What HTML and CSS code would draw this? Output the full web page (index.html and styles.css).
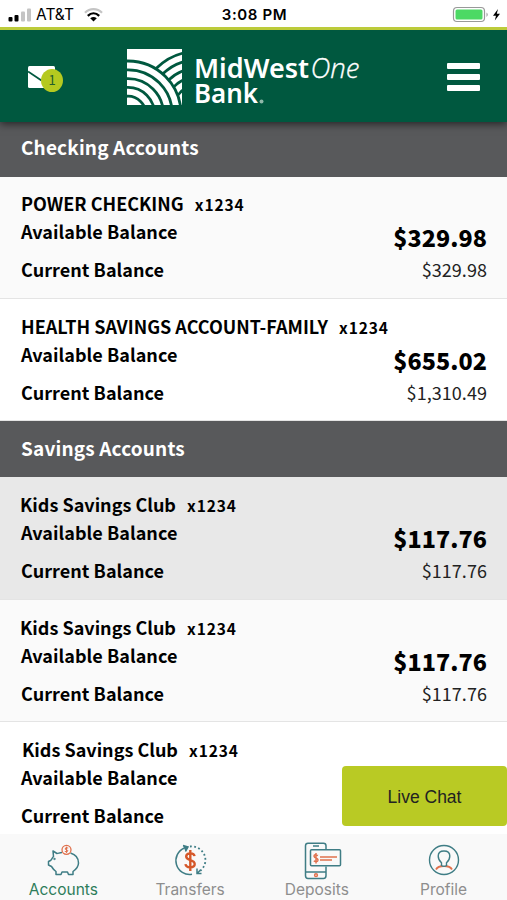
FILE: index.html
```html
<!DOCTYPE html>
<html lang="en">
<head>
    <meta charset="utf-8">
    <title>MidWestOne Bank</title>
    <meta name="viewport" content="width=device-width, initial-scale=1">
    <link rel="stylesheet" href="styles.css">
</head>
<body>
    <div class="app">
        <div class="status-bar">
            <div class="carrier">
                <svg class="signal" width="24" height="14" viewBox="0 0 24 14">
                    <rect x="0.500" y="9" width="4" height="4.500" rx="1" fill="#000"/>
                    <rect x="6.500" y="7" width="4" height="6.500" rx="1" fill="#000"/>
                    <rect x="13" y="3.500" width="4" height="10" rx="1" fill="#c4c4c4"/>
                    <rect x="19" y="0.500" width="4" height="13" rx="1" fill="#c4c4c4"/>
                </svg>
                <span>AT&amp;T</span>
                <svg class="wifi" width="19" height="14" viewBox="0 0 19 14" fill="none" stroke-width="2.300">
                    <path d="M1 4.800C5.800 0 13.200 0 18 4.800" stroke="#c4c4c4"/>
                    <path d="M3.800 7.800C7.200 4.600 11.800 4.600 15.200 7.800" stroke="#000"/>
                    <path d="M6.200 10.300Q9.500 7.600 12.800 10.300L9.500 13.500Z" fill="#000"/>
                </svg>
            </div>
            <div class="time">3:08 PM</div>
            <div class="power">
                <svg width="49" height="18" viewBox="0 0 49 18">
                    <rect x="1.500" y="1.500" width="31" height="14" rx="3.500" fill="#fff" stroke="#999" stroke-width="1.200"/>
                    <rect x="3.500" y="3.500" width="27" height="10" rx="1.500" fill="#4cd964"/>
                    <path d="M34.500 6.500q2.500 2 0 4.500z" fill="#999"/>
                    <path d="M46 3L41 9.800h3L42.800 14.500 48 7.800h-3.200z" fill="#000"/>
                </svg>
            </div>
        </div>

        <div class="header">
            <div class="mail">
                <svg width="28" height="22" viewBox="0 0 28 22">
                    <rect width="27" height="22" rx="1.500" fill="#fff"/>
                    <path d="M0 5.500L13.500 14.500" fill="none" stroke="#00583f" stroke-width="1.800"/>
                </svg>
                <span class="badge">1</span>
            </div>
            <div class="brand">
                <svg class="brand-mark" width="55" height="56" viewBox="0 0 55 56">
                    <rect width="55" height="56" fill="#fff"/>
                    <g fill="none" stroke="#00583f" stroke-width="2.800">
                        <circle cx="70" cy="60" r="57.500"/>
                        <circle cx="70" cy="60" r="49"/>
                        <circle cx="70" cy="60" r="40.500"/>
                        <circle cx="70" cy="60" r="32"/>
                        <circle cx="70" cy="60" r="23.500"/>
                        <circle cx="1" cy="65" r="53" fill="#fff"/>
                        <circle cx="1" cy="65" r="44.200"/>
                        <circle cx="1" cy="65" r="35.400"/>
                        <circle cx="1" cy="65" r="26.600"/>
                        <circle cx="1" cy="65" r="17.800"/>
                    </g>
                </svg>
                <svg class="brand-name" width="168" height="60" viewBox="0 0 168 60">
                    <text class="brand-bold" x="0" y="28.500" textLength="115" lengthAdjust="spacingAndGlyphs">MidWest</text>
                    <text class="brand-light" x="116.500" y="28.500" textLength="49" lengthAdjust="spacingAndGlyphs">One</text>
                    <text class="brand-bold" x="0" y="54" textLength="64" lengthAdjust="spacingAndGlyphs">Bank</text>
                    <circle cx="67.500" cy="52.500" r="2" fill="#8fb8a9"/>
                </svg>
            </div>
            <div class="menu">
                <span></span>
                <span></span>
                <span></span>
            </div>
        </div>

        <div class="accounts">
            <div class="section-title first">Checking Accounts</div>
            <div class="account alt">
                <div class="name">POWER CHECKING <span class="number">x1234</span></div>
                <div class="available"><span>Available Balance</span><b>$329.98</b></div>
                <div class="current"><span>Current Balance</span><em>$329.98</em></div>
            </div>
            <div class="account">
                <div class="name">HEALTH SAVINGS ACCOUNT-FAMILY <span class="number">x1234</span></div>
                <div class="available"><span>Available Balance</span><b>$655.02</b></div>
                <div class="current"><span>Current Balance</span><em>$1,310.49</em></div>
            </div>
            <div class="section-title">Savings Accounts</div>
            <div class="account selected">
                <div class="name kids">Kids Savings Club <span class="number">x1234</span></div>
                <div class="available"><span>Available Balance</span><b>$117.76</b></div>
                <div class="current"><span>Current Balance</span><em>$117.76</em></div>
            </div>
            <div class="account alt">
                <div class="name kids">Kids Savings Club <span class="number">x1234</span></div>
                <div class="available"><span>Available Balance</span><b>$117.76</b></div>
                <div class="current"><span>Current Balance</span><em>$117.76</em></div>
            </div>
            <div class="account">
                <div class="name last">Kids Savings Club <span class="number">x1234</span></div>
                <div class="available"><span>Available Balance</span></div>
                <div class="current"><span>Current Balance</span></div>
            </div>
            <button class="live-chat">Live Chat</button>
        </div>

        <div class="tab-bar">
            <div class="tab active">
                <svg width="36" height="38" viewBox="0 0 36 38" fill="none" stroke="#3f7d85" stroke-width="1.500" stroke-linejoin="round">
                    <path d="M17 12.500C14.500 12.500 13.500 13.500 12 13.500L8 11 8.500 16.500C7 18 6.500 20 5.500 20.500L3.500 21.500V25L6.500 26.500C8 29 9.500 30.500 11 31.500V34.500H16L17 32H22.500L23.500 34.500H28V31.500C31.500 29 33.500 26.500 33.500 23C33.500 18 30.500 14.500 25.500 13"/>
                    <circle cx="9.500" cy="19" r=".4"/>
                    <circle cx="21.500" cy="9.800" r="4.500" stroke="#e0714d" stroke-width="1.300"/>
                    <path d="M23.200 8Q19.800 7 20.100 9.100L22.900 10.500Q23.100 12.500 19.800 11.500M21.500 6.700v6.200" stroke="#e0714d" stroke-width="1"/>
                </svg>
                <span>Accounts</span>
            </div>
            <div class="tab">
                <svg width="36" height="38" viewBox="0 0 36 38" fill="none" stroke="#3f7d85" stroke-width="1.500">
                    <path d="M12.500 8A13.700 13.700 0 0 0 20 34.200"/>
                    <path d="M18 6.500A13.700 13.700 0 0 1 28 31" stroke-width="1.800" stroke-dasharray="1.800 2.400"/>
                    <path d="M11 5.500L16 7 13.500 11.500" fill="#3f7d85"/>
                    <path d="M25 28.500V33.500H29.500M25 33.500L28.500 30"/>
                    <path d="M22.500 16.200C22 12.200 14.200 12.600 14.200 16.600C14.200 21 22.700 19.200 22.700 24C22.700 28.300 14 28.400 13.500 24.200M18.300 10v21" stroke="#d5582a" stroke-width="2.400"/>
                </svg>
                <span>Transfers</span>
            </div>
            <div class="tab">
                <svg class="deposit-icon" width="38" height="38" viewBox="0 0 38 38" fill="none" stroke="#3f7d85" stroke-width="1.500">
                    <path d="M22 7.700V3.800Q22 1.200 19.500 1.200H4Q1.500 1.200 1.500 3.800V33.500Q1.500 36.500 4 36.500H19.500Q22 36.500 22 33.500V24.500M1.500 30H22M9 4h6"/>
                    <rect x="6.500" y="7.700" width="30" height="16" rx="1" fill="#f9f9f9"/>
                    <circle cx="12" cy="33.200" r="1.400" stroke="#e0714d"/>
                    <path d="M14 13.500Q10 11.500 10 14.200Q10.200 15.500 12 16Q14.500 17 13.800 18.700Q13 20.500 9.800 18.800M12 11v10.500M16 15H33M16 18h12" stroke="#e0714d"/>
                </svg>
                <span>Deposits</span>
            </div>
            <div class="tab">
                <svg width="36" height="38" viewBox="0 0 36 38" fill="none" stroke="#3f7d85" stroke-width="1.400">
                    <circle cx="18" cy="20" r="14.500"/>
                    <path d="M10 29.500C11.500 26.500 14 26 18 26S24.500 26.500 26 29.500" stroke="#e0714d" stroke-width="1.800"/>
                    <path d="M15.500 25.500V22.800Q12.200 20 12.200 16Q12.200 11 18 11T23.800 16Q23.800 20 20.500 22.800V25.500Q18 27 15.500 25.500Z" fill="#f9f9f9"/>
                </svg>
                <span>Profile</span>
            </div>
        </div>
    </div>
</body>
</html>
```
FILE: styles.css
```css
body {
    font-family: "Noto Sans CJK SC", sans-serif;
    margin: 0;
    padding: 0;
    background-color: #fff;
    color: #000;
}

.app {
    display: flex;
    flex-direction: column;
    height: 900px;
    overflow: hidden;
}

.status-bar {
    position: relative;
    z-index: 2;
    display: flex;
    align-items: center;
    justify-content: space-between;
    box-sizing: border-box;
    height: 30px;
    padding: 2px 6px 0 8px;
    border-bottom: 3px solid #bccb3a;
    background-color: #fff;
    font-family: Inter, sans-serif;
    font-size: 15px;
    line-height: 18px;
}

.carrier,
.power {
    display: flex;
    align-items: center;
    flex: 1;
}

.carrier {
    gap: 4px;
    font-size: 15.500px;
}

.wifi {
    margin-left: 6px;
}

.power {
    justify-content: flex-end;
}

.time {
    font-weight: 600;
    letter-spacing: 0.6px;
}

.header {
    display: flex;
    align-items: flex-start;
    box-sizing: border-box;
    height: 92px;
    flex-shrink: 0;
    padding: 19px 27px 0 28px;
    background-color: #00583f;
    box-shadow: 0 2px 8px rgba(0, 0, 0, 0.6);
    z-index: 1;
}

.mail {
    position: relative;
    width: 36px;
    height: 28px;
    margin-top: 17px;
}

.badge {
    position: absolute;
    left: 13px;
    top: 3px;
    width: 22px;
    height: 23px;
    border-radius: 50%;
    background-color: #b5c920;
    color: #245c2c;
    font-size: 13px;
    line-height: 22px;
    text-align: center;
}

.brand {
    display: flex;
    gap: 12px;
    margin-left: 63px;
}

.brand-name {
    overflow: visible;
}

.brand-bold,
.brand-light {
    font-family: "Noto Sans", sans-serif;
    font-size: 27px;
    fill: #fff;
}

.brand-bold {
    font-weight: 600;
}

.brand-light {
    font-family: "Open Sans", sans-serif;
    font-size: 28px;
    font-weight: 300;
    font-style: italic;
    stroke: #fff;
    stroke-width: 0.3px;
}

.menu {
    display: flex;
    flex-direction: column;
    gap: 5px;
    margin: 14px 0 0 auto;
}

.menu span {
    width: 33px;
    height: 6px;
    border-radius: 1px;
    background-color: #fff;
}

.accounts {
    position: relative;
    flex: 1;
    min-height: 0;
    overflow: hidden;
}

.section-title {
    box-sizing: border-box;
    height: 56px;
    padding: 0 21px;
    background-color: #58595b;
    color: #fff;
    font-size: 19px;
    font-weight: bold;
    letter-spacing: 0.15px;
    line-height: 53px;
}

.section-title.first {
    height: 55px;
    line-height: 50px;
}

.account {
    box-sizing: border-box;
    height: 122px;
    padding: 13px 20px 0 21px;
    border-bottom: 1px solid #e4e4e4;
    font-size: 18px;
    font-weight: bold;
    line-height: 28px;
}

.section-title.first + .account {
    padding-top: 12px;
}

.account.alt {
    background-color: #fafafa;
}

.account.selected {
    height: 123px;
    background-color: #e8e8e8;
}

.name {
    margin-bottom: -1px;
}

.name.kids {
    margin-left: -1px;
}

.name.last {
    margin-left: 1px;
}

.number {
    margin-left: 7px;
    font-size: 15.500px;
    letter-spacing: 0.9px;
}

.available,
.current {
    display: flex;
    justify-content: space-between;
    letter-spacing: 0.05px;
}

.available {
    height: 38px;
}

.available b {
    font-size: 23.300px;
    line-height: 40px;
}

.current em {
    font-size: 18px;
    font-style: normal;
    font-weight: normal;
    color: #222;
}

.live-chat {
    position: absolute;
    right: 0;
    bottom: 8px;
    width: 165px;
    height: 60px;
    padding: 2px 0 0;
    border: none;
    border-radius: 4px;
    background-color: #b9ca24;
    color: #222;
    font-family: "Liberation Sans", Arial, sans-serif;
    font-size: 17.500px;
}

.tab-bar {
    display: flex;
    height: 66px;
    flex-shrink: 0;
    background-color: #f9f9f9;
}

.tab {
    display: flex;
    flex: 1;
    flex-direction: column;
    align-items: center;
    padding-top: 6px;
    color: #8e8e8e;
    font-family: Inter, sans-serif;
    font-size: 15.500px;
    line-height: 23px;
}

.tab svg {
    flex-shrink: 0;
}

.tab.active {
    color: #2e7d5b;
}

.deposit-icon {
    margin: 2px 0 -2px 12px;
}
```
